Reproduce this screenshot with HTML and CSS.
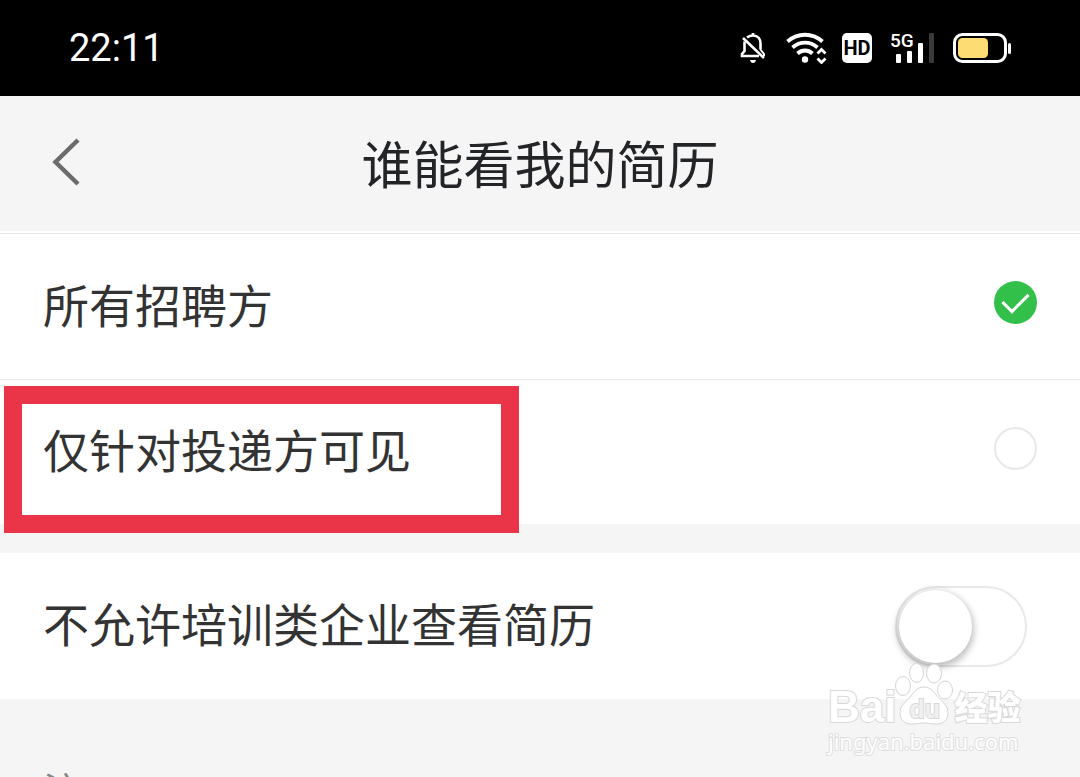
FILE: index.html
```html
<!DOCTYPE html>
<html lang="zh-CN">
<head>
    <meta charset="UTF-8">
    <meta name="viewport" content="width=device-width, initial-scale=1.0">
    <title>谁能看我的简历</title>
    <link rel="stylesheet" href="styles.css">
</head>
<body>
    <div class="app">
        <div class="status-bar">
            <time class="clock">22:11</time>
            <div class="status-icons">
                <svg class="icon-bell" width="26" height="32" viewBox="0 0 26 32" fill="none" stroke="#fff" stroke-width="2.6">
                    <path d="M7 5.5C8.500 4.300 10.500 3.500 13 3.500c5 0 7.500 3.500 7.500 8V17M4.500 9.500V19L2 22v2h17"/>
                    <path d="M13 1v3M3 6l21 20"/>
                    <path d="M20 17l4 5v2" stroke-width="2"/>
                    <path d="M10 28h6c-.5 2-1.500 3-3 3s-2.500-1-3-3z" fill="#fff" stroke="none"/>
                </svg>
                <svg class="icon-wifi" width="41" height="32" viewBox="0 0 41 32" fill="none" stroke="#fff" stroke-width="3.800">
                    <path d="M1.500 9.500C12 .5 26 .5 36.500 9.500"/>
                    <path d="M6.500 15.500c7.500-6.500 17.500-6.500 25 0"/>
                    <path d="M11.500 21.500c4.500-4 10.500-4 15 0"/>
                    <circle cx="19" cy="27.500" r="3.200" fill="#fff" stroke="none"/>
                    <path d="M31.500 21.500l4-4 4 4M31.500 26.500l4 4 4-4" stroke-width="2.800"/>
                </svg>
                <span class="badge-hd">HD</span>
                <span class="signal">
                    <svg width="44" height="31" viewBox="0 0 44 31" fill="#fff">
                        <rect x="6" y="21" width="5" height="9" rx="1"/>
                        <rect x="17" y="18" width="5" height="12" rx="1"/>
                        <rect x="28" y="10" width="5" height="20" rx="1"/>
                        <rect x="39" y="0" width="5" height="30" rx="1" fill="#3a3a3a"/>
                    </svg>
                    <span class="signal-type">5G</span>
                </span>
                <svg class="icon-battery" width="58" height="30" viewBox="0 0 58 30">
                    <rect x="1.500" y="1.500" width="51" height="27" rx="8" fill="none" stroke="#fff" stroke-width="3"/>
                    <rect x="5" y="5" width="30" height="20" rx="4.500" fill="#fddc74"/>
                    <rect x="55" y="10" width="3" height="11" rx="1.500" fill="#fff"/>
                </svg>
            </div>
        </div>

        <header class="nav-bar">
            <button class="back" type="button" aria-label="返回">
                <svg width="28" height="48" viewBox="0 0 28 48" fill="none" stroke="#6b6b6b" stroke-width="4.500">
                    <path d="M26 2L3.500 24 26 46"/>
                </svg>
            </button>
            <h1>谁能看我的简历</h1>
        </header>

        <main>
            <div class="group options">
                <div class="row">
                    <label for="all">所有招聘方</label>
                    <input class="radio" type="radio" name="visible" id="all" checked>
                </div>
                <div class="row">
                    <label for="applied">仅针对投递方可见</label>
                    <input class="radio" type="radio" name="visible" id="applied">
                    <span class="highlight"></span>
                </div>
            </div>

            <div class="group">
                <div class="row row-switch">
                    <label for="training">不允许培训类企业查看简历</label>
                    <input class="switch" type="checkbox" role="switch" id="training">
                </div>
            </div>

            <p class="note">注</p>
        </main>

        <div class="watermark">
            <div class="brand">
                <span class="brand-bai">Bai</span>
                <span class="paw">
                    <svg width="60" height="64" viewBox="0 0 60 64" fill="#fff" stroke="#d4d4d4">
                        <ellipse cx="9" cy="24" rx="7.500" ry="9.500"/>
                        <ellipse cx="22.500" cy="11" rx="7" ry="9.500"/>
                        <ellipse cx="40" cy="11.500" rx="7.500" ry="9.500"/>
                        <ellipse cx="51" cy="28" rx="7.500" ry="9"/>
                        <path d="M30 25c7 0 10 5 13 9 5 6 11 9 11 17 0 7-5 11-11 11-5 0-8-1-13-1s-8 1-13 1c-6 0-11-4-11-11 0-8 6-11 11-17 3-4 6-9 13-9z"/>
                    </svg>
                    <span class="brand-du">du</span>
                </span>
                <span class="brand-cn">经验</span>
            </div>
            <div class="site">jingyan.baidu.com</div>
        </div>
    </div>
</body>
</html>
```
FILE: styles.css
```css
* {
    box-sizing: border-box;
}

body {
    margin: 0;
    font-family: "Noto Sans CJK SC", sans-serif;
    background-color: #f5f5f5;
    color: #333;
}

.app {
    position: relative;
    height: 100vh;
    overflow: hidden;
}

/* Status bar */
.status-bar {
    display: flex;
    justify-content: space-between;
    align-items: center;
    height: 96px;
    padding: 0 69px;
    background-color: #000;
    color: #fff;
}

.clock {
    font-family: Roboto, sans-serif;
    font-size: 38px;
}

.status-icons {
    display: flex;
    align-items: center;
}

.icon-wifi {
    margin: 0 15px 0 20px;
}

.badge-hd {
    width: 30px;
    height: 30px;
    border-radius: 5px;
    background-color: #fff;
    color: #000;
    font: bold 20px/30px Roboto, sans-serif;
    text-align: center;
}

.signal {
    position: relative;
    height: 31px;
    margin: 0 19px 0 18px;
}

.signal-type {
    position: absolute;
    top: -1px;
    left: 0;
    font: 500 19px/18px Roboto, sans-serif;
}

/* Title bar */
.nav-bar {
    position: relative;
    display: flex;
    justify-content: center;
    align-items: center;
    height: 135px;
}

.nav-bar h1 {
    margin: 0;
    padding-bottom: 4px;
    font-size: 51px;
    font-weight: 400;
    line-height: 76px;
    color: #222427;
}

.back {
    position: absolute;
    left: 32px;
    top: 22px;
    padding: 20px;
    border: none;
    background: none;
    cursor: pointer;
}

.back svg {
    display: block;
}

/* Settings */
.group {
    margin-bottom: 29px;
    background-color: #fff;
}

.options {
    padding-top: 2px;
}

.row {
    position: relative;
    display: flex;
    justify-content: space-between;
    align-items: center;
    height: 146px;
    padding: 0 43px;
    font-size: 46px;
}

.row label {
    padding-bottom: 8px;
}

.options .row {
    border-top: 1px solid #e8e8e8;
}

.options .row:last-child {
    height: 145px;
}

.row-switch {
    padding-right: 53px;
}

.radio {
    appearance: none;
    display: grid;
    place-items: center;
    width: 43px;
    height: 43px;
    margin: 0 0 8px;
    border: 2px solid #e8e8e8;
    border-radius: 50%;
}

.radio:checked {
    border: none;
    background-color: #32c04b;
}

.radio:checked::before {
    content: "";
    width: 22px;
    height: 12px;
    margin-bottom: 6px;
    border: solid #fff;
    border-width: 0 0 3px 3px;
    transform: rotate(-45deg);
}

.highlight {
    position: absolute;
    top: 6px;
    left: 4px;
    width: 515px;
    height: 147px;
    border: 18px solid #e93547;
    pointer-events: none;
    z-index: 1;
}

.switch {
    appearance: none;
    width: 132px;
    height: 81px;
    margin: 0;
    padding: 2px;
    border: 2px solid #e8e8e8;
    border-radius: 41px;
    background-color: #fff;
}

.switch::before {
    content: "";
    display: block;
    width: 73px;
    height: 73px;
    border-radius: 50%;
    background-color: #fff;
    box-shadow: 0 3px 7px 2px rgba(0, 0, 0, 0.25);
}

.switch:checked::before {
    margin-left: auto;
}

.note {
    margin: 0;
    padding: 33px 43px;
    font-size: 38px;
    color: #888;
}

/* Watermark */
.watermark {
    position: absolute;
    right: 58px;
    bottom: 21px;
    width: 194px;
    color: #fff;
    white-space: nowrap;
    pointer-events: none;
}

.brand {
    display: flex;
    align-items: flex-end;
    height: 64px;
    -webkit-text-stroke: 2px #d8d8d8;
    paint-order: stroke fill;
}

.brand-bai {
    font: bold 44px/38px "Liberation Sans", sans-serif;
}

.paw {
    position: relative;
    height: 64px;
    margin-left: -2px;
}

.paw svg {
    display: block;
    paint-order: normal;
}

.brand-du {
    position: absolute;
    left: 15px;
    bottom: 2px;
    font: bold 25px/30px "Liberation Sans", sans-serif;
    color: #f0f0f0;
}

.brand-cn {
    font-size: 33px;
    font-weight: 900;
    line-height: 40px;
}

.site {
    font: 22px/30px "Noto Sans", sans-serif;
    -webkit-text-stroke: 2px #dedede;
    paint-order: stroke fill;
}
```
